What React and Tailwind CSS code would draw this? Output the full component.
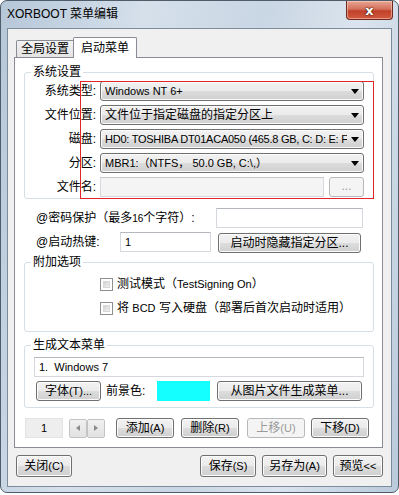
import React from "react";

const btnBase =
  "flex items-center justify-center rounded-[3px] border border-[#707070] bg-[linear-gradient(#f2f2f2_0%,#ebebeb_50%,#dddddd_50%,#cfcfcf_100%)] shadow-[inset_0_0_0_1px_#fbfbfb] text-[12px] leading-[14px] text-black whitespace-nowrap";

const btnDisabled =
  "flex items-center justify-center rounded-[3px] border border-[#b5b9bc] bg-[#f4f4f4] text-[12px] leading-[14px] text-[#9a9a9a] whitespace-nowrap";

const textBox =
  "flex items-center h-[20px] border border-[#d5d8de] border-t-[#b4b7bd] bg-white text-[12px] leading-[14px] px-[4px]";

function L({ children }) {
  return <span className="text-[11px]">{children}</span>;
}

function Combo({ children }) {
  return (
    <div className={`${btnBase} w-[264px] h-[20px] !justify-between pl-[4px] pr-[4px] gap-[4px]`}>
      <span className="flex-1 overflow-hidden whitespace-nowrap">{children}</span>
      <svg width="8" height="5" viewBox="0 0 8 5" className="shrink-0">
        <polygon points="0,0 8,0 4,5" fill="#000" />
      </svg>
    </div>
  );
}

function Row({ label, children }) {
  return (
    <div className="flex items-center h-[20px]">
      <div className="w-[71px] text-right text-[12px] leading-[14px]">{label}</div>
      <div className="ml-[4px] flex items-center">{children}</div>
    </div>
  );
}

function CheckBox() {
  return (
    <span className="w-[13px] h-[13px] border border-[#8e8f8f] bg-white p-[2px] flex shrink-0">
      <span className="flex-1 bg-[linear-gradient(135deg,#cfd1d4,#f3f3f3)] border border-[#d8d8d8]" />
    </span>
  );
}

export default function App() {
  return (
    <div className="w-[399px] h-[495px] bg-white font-['Liberation_Sans','Noto_Sans_CJK_SC',sans-serif] text-black">
      <div className="w-[399px] h-[493px] rounded-[7px] border border-[#4f5d6b] bg-[linear-gradient(100deg,#b6c7d8_0%,#d5e0eb_30%,#c9d6e3_55%,#dbe4ee_75%,#b9cadb_100%)] flex flex-col">
        {/* title bar */}
        <div className="h-[27px] flex items-start">
          <div className="pl-[6px] pt-[6px] text-[12px] leading-[14px] text-black flex-1">XORBOOT 菜单编辑</div>
          <div className="mr-[5px] w-[47px] h-[19px] rounded-b-[4px] border border-t-0 border-[#6e2a1f] bg-[linear-gradient(#e7a595_0%,#d4715b_45%,#c0412a_55%,#d25a40_100%)] shadow-[inset_0_0_0_1px_rgba(255,220,210,0.5)] flex items-center justify-center">
            <span className="text-white text-[13px] leading-none font-bold [text-shadow:0_0_2px_#3a0d05,0_0_1px_#3a0d05] font-['DejaVu_Sans',sans-serif]">x</span>
          </div>
        </div>
        {/* client */}
        <div className="mx-[6px] h-[459px] border border-[#7d8c9c] bg-[#f0f0f0] pt-[8px] flex flex-col">
          {/* tabs */}
          <div className="flex items-end pl-[8px] h-[20px]">
            <div className="w-[58px] h-[17px] border border-b-0 border-[#898c95] rounded-tl-[2px] bg-[linear-gradient(#f2f2f2,#e3e3e3)] flex items-center justify-center text-[12px] leading-[14px]">
              全局设置
            </div>
            <div className="relative z-10 w-[64px] h-[21px] mb-[-1px] ml-[-1px] border border-b-0 border-[#898c95] rounded-t-[2px] bg-white flex items-center justify-center text-[12px] leading-[14px] pb-[1px]">
              启动菜单
            </div>
          </div>
          {/* panel */}
          <div className="ml-[6px] w-[369px] border border-[#898c95] bg-white flex flex-col pb-[9px]">
            {/* group 1 */}
            <div className="relative mt-[7px] ml-[9px] w-[350px]">
              <fieldset className="border border-[#d5dfe5] rounded-[3px] pb-[1px]">
                <legend className="ml-[6px] px-[2px] text-[12px] leading-[14px]">系统设置</legend>
                <div className="mt-[2px] flex flex-col gap-[4px]">
                  <Row label="系统类型:">
                    <Combo><L>Windows NT 6+</L></Combo>
                  </Row>
                  <Row label="文件位置:">
                    <Combo>文件位于指定磁盘的指定分区上</Combo>
                  </Row>
                  <Row label="磁盘:">
                    <Combo><span className="text-[11px] tracking-[-0.25px]">HD0: TOSHIBA DT01ACA050 (465.8 GB, C: D: E: F</span></Combo>
                  </Row>
                  <Row label="分区:">
                    <Combo><L>MBR1:（NTFS， 50.0 GB, C:\,）</L></Combo>
                  </Row>
                  <Row label="文件名:">
                    <div className="w-[224px] h-[20px] border border-[#d5d8de] border-t-[#c4c7cc] bg-[#f4f4f4]" />
                    <div className={`${btnDisabled} ml-[5px] w-[35px] h-[20px] pb-[3px]`}>...</div>
                  </Row>
                </div>
              </fieldset>
              <div className="absolute left-[56px] top-[16px] w-[294px] h-[118px] border border-[#e0262b] pointer-events-none" />
            </div>

            {/* password row */}
            <div className="mt-[9px] flex items-center h-[20px] pl-[21px]">
              <div className="w-[180px] text-[12px] leading-[14px]">@密码保护（最多<span className="text-[10px]">16</span>个字符）:</div>
              <div className={`${textBox} w-[147px]`} />
            </div>
            {/* hotkey row */}
            <div className="mt-[4px] flex items-center h-[20px] pl-[21px]">
              <div className="w-[84px] text-[12px] leading-[14px]">@启动热键:</div>
              <div className={`${textBox} w-[91px]`}><L>1</L></div>
              <div className={`${btnBase} ml-[7px] w-[143px] h-[20px] mt-[1px]`}>启动时隐藏指定分区...</div>
            </div>

            {/* group 2 */}
            <fieldset className="mt-[3px] ml-[9px] w-[350px] border border-[#d5dfe5] rounded-[3px] pb-[15px]">
              <legend className="ml-[6px] px-[2px] text-[12px] leading-[14px]">附加选项</legend>
              <div className="mt-[7px] pl-[75px] flex items-center gap-[4px] h-[16px] text-[12px] leading-[14px]">
                <CheckBox />
                <span>测试模式（<L>TestSigning On</L>）</span>
              </div>
              <div className="mt-[8px] pl-[75px] flex items-center gap-[4px] h-[16px] text-[12px] leading-[14px]">
                <CheckBox />
                <span>将 <L>BCD</L> 写入硬盘（部署后首次启动时适用）</span>
              </div>
            </fieldset>

            {/* group 3 */}
            <fieldset className="mt-[6px] ml-[9px] w-[350px] border border-[#d5dfe5] rounded-[3px] pb-[6px]">
              <legend className="ml-[6px] px-[2px] text-[12px] leading-[14px]">生成文本菜单</legend>
              <div className={`${textBox} mt-[5px] ml-[9px] w-[330px]`}><L>1.&nbsp;&nbsp;Windows 7</L></div>
              <div className="mt-[4px] ml-[11px] flex items-center h-[20px]">
                <div className={`${btnBase} w-[65px] h-[20px]`}>字体<L>(T)...</L></div>
                <div className="ml-[5px] w-[51px] text-[12px] leading-[14px]">前景色:</div>
                <div className="w-[53px] h-[20px] bg-[#14ffff]" />
                <div className={`${btnBase} ml-[7px] w-[145px] h-[20px]`}>从图片文件生成菜单...</div>
              </div>
            </fieldset>

            {/* bottom row in panel */}
            <div className="mt-[10px] ml-[10px] flex items-center h-[20px]">
              <div className="w-[38px] h-[20px] bg-[#eeeeee] border border-[#e4e4e4] flex items-center justify-center text-[11px] leading-[14px]">1</div>
              <div className="ml-[6px] flex">
                <div className="w-[18px] h-[19px] border border-[#c3c3c3] rounded-[2px] bg-[linear-gradient(#f0f0f0,#e2e2e2)] flex items-center justify-center">
                  <svg width="4" height="6" viewBox="0 0 4 6"><polygon points="4,0 4,6 0,3" fill="#8a8a8a" /></svg>
                </div>
                <div className="w-[18px] h-[19px] border border-[#c3c3c3] rounded-[2px] bg-[linear-gradient(#f0f0f0,#e2e2e2)] flex items-center justify-center">
                  <svg width="4" height="6" viewBox="0 0 4 6"><polygon points="0,0 0,6 4,3" fill="#8a8a8a" /></svg>
                </div>
              </div>
              <div className={`${btnBase} ml-[11px] w-[58px] h-[20px]`}>添加<L>(A)</L></div>
              <div className={`${btnBase} ml-[7px] w-[58px] h-[20px]`}>删除<L>(R)</L></div>
              <div className={`${btnDisabled} ml-[8px] w-[58px] h-[20px]`}>上移<L>(U)</L></div>
              <div className={`${btnBase} ml-[6px] w-[58px] h-[20px]`}>下移<L>(D)</L></div>
            </div>
          </div>

          {/* bottom buttons */}
          <div className="mt-[7px] flex items-center h-[22px] px-[8px]">
            <div className={`${btnBase} w-[56px] h-[22px]`}>关闭<L>(C)</L></div>
            <div className="flex-1" />
            <div className={`${btnBase} w-[56px] h-[22px]`}>保存<L>(S)</L></div>
            <div className={`${btnBase} ml-[6px] w-[65px] h-[22px]`}>另存为<L>(A)</L></div>
            <div className={`${btnBase} ml-[6px] w-[50px] h-[22px]`}>预览<L>&lt;&lt;</L></div>
          </div>
        </div>
      </div>
    </div>
  );
}
